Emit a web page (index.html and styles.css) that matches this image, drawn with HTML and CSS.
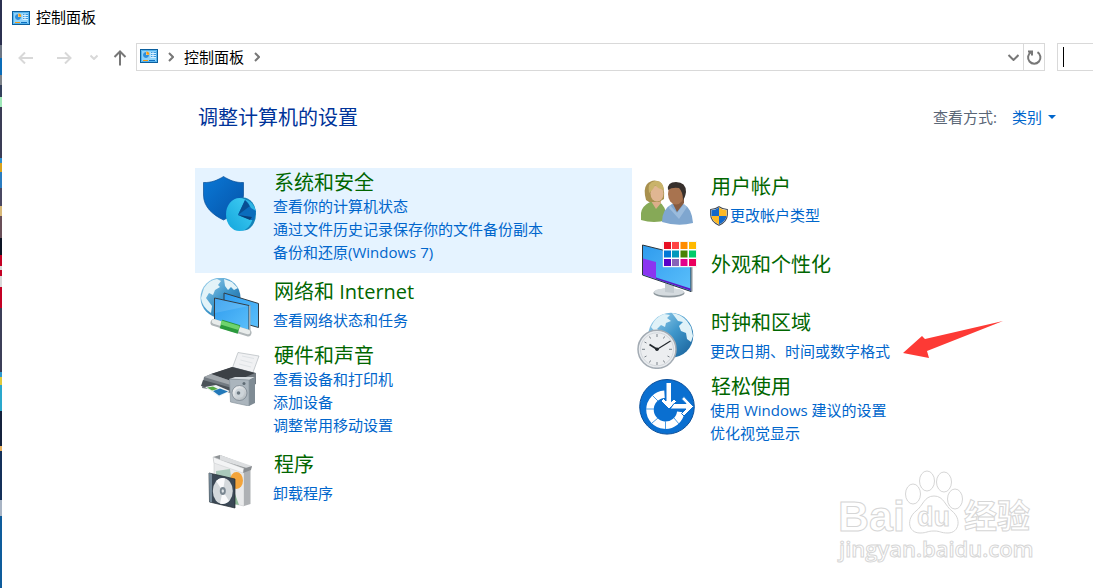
FILE: index.html
```
<!DOCTYPE html>
<html lang="zh-CN">
<head>
  <meta charset="UTF-8">
  <meta name="viewport" content="width=device-width, initial-scale=1.0">
  <title>控制面板</title>
  <link rel="stylesheet" href="styles.css">
</head>
<body>
  <svg class="defs" aria-hidden="true">
    <defs>
      <symbol id="panel-icon" viewBox="0 0 18 14">
        <rect x="0.5" y="0.5" width="17" height="13" fill="#8fd3fb" stroke="#0b5f9e"/>
        <path d="M1.5 1.5h15v11h-15z" fill="none" stroke="#56b4ee"/>
        <circle cx="6" cy="6" r="3" fill="#fff"/>
        <path d="M6 3a3 3 0 1 0 3 3H6z" fill="#2c8fdc"/>
        <path d="M6.3 5.7V2.6a3.1 3.1 0 0 1 3 3.1z" fill="#f59a12"/>
        <path d="M10.500 3h5.500v6h-5.500z" fill="#d8f0ff"/>
        <path d="M11 3.5h1.5M13.5 3.5H16M11 5.5h1.500M13.5 5.5H16M11 7.500h1.500M13.5 7.500H16" stroke="#3c9be0"/>
        <path d="M3 11.500h5" stroke="#f59a12"/>
        <path d="M9 11.500h6" stroke="#0d6fc0"/>
      </symbol>
      <linearGradient id="globe" x1="0" y1="0" x2="1" y2="1">
        <stop offset="0" stop-color="#a9d8f0"/>
        <stop offset="0.5" stop-color="#3f97cb"/>
        <stop offset="1" stop-color="#155c96"/>
      </linearGradient>
      <linearGradient id="screen" x1="0" y1="0" x2="1" y2="1">
        <stop offset="0" stop-color="#2e9bee"/>
        <stop offset="1" stop-color="#5cc0fb"/>
      </linearGradient>
      <linearGradient id="metal" x1="0" y1="0" x2="1" y2="1">
        <stop offset="0" stop-color="#fafbfc"/>
        <stop offset="1" stop-color="#aab2b8"/>
      </linearGradient>
      <linearGradient id="shield" x1="0" y1="0" x2="1" y2="1">
        <stop offset="0" stop-color="#0a78d6"/>
        <stop offset="1" stop-color="#0553a8"/>
      </linearGradient>
      <linearGradient id="pie" x1="0" y1="1" x2="1" y2="0">
        <stop offset="0" stop-color="#12a5dc"/>
        <stop offset="1" stop-color="#45d0f5"/>
      </linearGradient>
    </defs>
  </svg>

  <div class="window">
    <header class="title-bar">
      <svg class="panel-icon"><use href="#panel-icon"/></svg>
      <span>控制面板</span>
    </header>

    <nav class="toolbar">
      <div class="nav-buttons">
        <button type="button" aria-label="后退" disabled>
          <svg width="16" height="14" viewBox="0 0 16 14"><path d="M15 8H1.500M7 2.500L1.500 8L7 13.500"/></svg>
        </button>
        <button type="button" aria-label="前进" disabled>
          <svg width="16" height="14" viewBox="0 0 16 14"><path d="M1 8h13.500M9 2.500L14.500 8L9 13.500"/></svg>
        </button>
        <button type="button" class="recent" aria-label="最近位置" disabled>
          <svg width="8" height="6" viewBox="0 0 8 6"><path d="M0.500 1.500L4 5L7.500 1.500"/></svg>
        </button>
        <button type="button" class="up" aria-label="上移">
          <svg width="14" height="18" viewBox="0 0 14 18"><path d="M7 17.500V3.500M1.500 9L7 3.500L12.500 9"/></svg>
        </button>
      </div>
      <div class="address">
        <svg class="panel-icon"><use href="#panel-icon"/></svg>
        <svg class="chevron" viewBox="0 0 6 10"><path d="M1 1l4 4l-4 4"/></svg>
        <a href="#">控制面板</a>
        <svg class="chevron" viewBox="0 0 6 10"><path d="M1 1l4 4l-4 4"/></svg>
        <button type="button" class="history" aria-label="历史记录">
          <svg width="12" height="8" viewBox="0 0 12 8"><path d="M1.500 2l5 5l5-5"/></svg>
        </button>
        <button type="button" class="refresh" aria-label="刷新">
          <svg width="16" height="16" viewBox="0 0 16 16"><path d="M11.500 3.200A6.200 6.200 0 1 1 5 3.200M2 2.500h4v4"/></svg>
        </button>
      </div>
      <div class="search">
        <input type="text" aria-label="搜索">
      </div>
    </nav>

    <main>
      <div class="heading">
        <h1>调整计算机的设置</h1>
        <div class="view-by">
          <label for="view">查看方式:</label>
          <span class="view-select">
            <select id="view">
              <option>类别</option>
            </select>
          </span>
        </div>
      </div>

      <div class="categories">
        <div class="column">
          <section class="category dense selected">
            <svg class="icon" viewBox="0 0 60 60">
              <path d="M3.500 9.500C11 10 18 7 23.500 3.500C29 7 36 10 43.500 9.500V22C43.500 34 34 42 23.500 47C13 42 3.500 34 3.500 22Z" fill="url(#shield)" stroke="#0a4f96" stroke-width="0.700"/>
              <ellipse cx="43" cy="41" rx="13" ry="16.500" fill="#1583b8"/>
              <ellipse cx="39.500" cy="41.500" rx="13.500" ry="16.500" fill="url(#pie)"/>
              <path d="M38 42L45 27L51 31L56 38L54 47L51 47Z" fill="#0a6cbc"/>
              <path d="M38 42L45 27L50 33Z" fill="#084f93"/>
              <path d="M38 42L52 44L50 47Z" fill="#08407a"/>
              <path d="M45 26.500Q53 28 56 38L51 35Q49 30 45 26.500Z" fill="#2fb4e4"/>
            </svg>
            <div class="text">
              <h2><a href="#">系统和安全</a></h2>
              <ul>
                <li><a href="#">查看你的计算机状态</a></li>
                <li><a href="#">通过文件历史记录保存你的文件备份副本</a></li>
                <li><a href="#">备份和还原(Windows 7)</a></li>
              </ul>
            </div>
          </section>

          <section class="category">
            <svg class="icon" viewBox="0 0 60 60">
              <circle cx="20.500" cy="19.700" r="20" fill="url(#globe)"/>
              <path d="M4 10Q9 2 17 1L21 3L18 7L20 9L15 12L13 17L9 15L6 20L9 24L12 28L11 35Q2 29 1 20Z" fill="#e3f3f8"/>
              <path d="M24 1L32 4L38 10L34 12L31 9L28 12L25 8Z" fill="#e3f3f8"/>
              <path d="M24 15L58.500 25.500V49.500L46 46L24 38Z" fill="url(#screen)" stroke="#333d45"/>
              <path d="M14.500 20L49 27.500V54L14.500 42Z" fill="url(#screen)" stroke="#333d45"/>
              <path d="M15 20.500L48.500 28L15 35Z" fill="#fff" opacity="0.120"/>
              <path d="M49 28V54L50.500 53V27Z" fill="#a3adb3"/>
              <path d="M14 44.500L48 55" stroke="#afb6b8" stroke-width="7" stroke-linecap="round"/>
              <path d="M14 43.500L48 54" stroke="#e8eceb" stroke-width="4.500" stroke-linecap="round"/>
              <path d="M21 46L39 51.500" stroke="#2a9a3c" stroke-width="9"/>
              <path d="M21 44.500L39 50" stroke="#6fd36d" stroke-width="4"/>
            </svg>
            <div class="text">
              <h2><a href="#">网络和 Internet</a></h2>
              <ul>
                <li><a href="#">查看网络状态和任务</a></li>
              </ul>
            </div>
          </section>

          <section class="category dense">
            <svg class="icon" viewBox="0 0 60 60">
              <path d="M38 6.500L59 10L52 29L32 23Z" fill="#f0f1f3" stroke="#b4babf" stroke-width="0.700"/>
              <path d="M42 10l12 2.500M40.500 14l12 3M39 18l12 3" stroke="#dfe3e6"/>
              <path d="M4 31L11 28L33 21L56 27V38L33 47L2 42Z" fill="#737b82"/>
              <path d="M11 28L32 21L55 27L34 36Z" fill="#3c4146"/>
              <path d="M4 31L11 28L34 36V40Z" fill="#a2a8ad"/>
              <path d="M3 34L32 42V47L1 40Z" fill="#4b5259"/>
              <path d="M5 41L16 39L30 45L19 51Z" fill="#eef3f5"/>
              <path d="M7 41.500L13 40.500L18 43L12 44.500Z" fill="#54a944"/>
              <path d="M13 45L20 42.500L28 45.500L19 49.500Z" fill="#2278b8"/>
              <path d="M29.500 33L35 31H55L49 34Z" fill="#d4dade"/>
              <path d="M49 34L55 31V57L49 60Z" fill="#7f8b94"/>
              <path d="M29.500 33L49 34V60L30.500 56Z" fill="#abb5bd" stroke="#89959e" stroke-width="0.700"/>
              <circle cx="39.500" cy="47" r="7.500" fill="url(#metal)" stroke="#717d86" stroke-width="0.700"/>
              <circle cx="39.500" cy="47" r="4.500" fill="#cdd4d9"/>
              <circle cx="38.500" cy="47" r="1.800" fill="#6d7982"/>
              <circle cx="44" cy="37.500" r="1.500" fill="#5f6b74"/>
            </svg>
            <div class="text">
              <h2><a href="#">硬件和声音</a></h2>
              <ul>
                <li><a href="#">查看设备和打印机</a></li>
                <li><a href="#">添加设备</a></li>
                <li><a href="#">调整常用移动设置</a></li>
              </ul>
            </div>
          </section>

          <section class="category">
            <svg class="icon" viewBox="0 0 60 60">
              <path d="M14 9L44 18V55L14 49Z" fill="#e9eaeb" stroke="#c3c5c7" stroke-width="0.500"/>
              <path d="M44 18L50.500 16V53L44 55Z" fill="#aeb1b4"/>
              <path d="M13 6L20 4L52 16L44 20L14 11Z" fill="#8f9396"/>
              <path d="M20 4L52 15L50 18L20 9Z" fill="#dcdee0"/>
              <path d="M13 6L44 17.500L43 22L14 12Z" fill="#f3f4f5" stroke="#c6c8ca" stroke-width="0.500"/>
              <path d="M44 17.500L52 15L51 19L43 22Z" fill="#898d91"/>
              <path d="M16 20L30 18L32 32H16Z" fill="#a9c9ba"/>
              <path d="M34 40L39 54L34 53Z" fill="#8fbb98"/>
              <ellipse cx="36.500" cy="29.500" rx="6.500" ry="8.500" fill="#f3a43b"/>
              <path d="M9 22L35 28V57L9.500 51Z" fill="#3b4855" stroke="#20292f" stroke-width="0.700"/>
              <path d="M9 22L12 22.800V51.500L9.500 51Z" fill="#748897"/>
              <ellipse cx="22.800" cy="40" rx="10" ry="13" fill="#d4d9dc"/>
              <path d="M22.800 40L16 30Q20 26 25 27.500ZM22.800 40L29 50Q25 54 20 52.500Z" fill="#f9fafb"/>
              <ellipse cx="22.800" cy="40" rx="3" ry="4" fill="#7a8791"/>
              <ellipse cx="22.800" cy="40" rx="1.200" ry="1.700" fill="#dfe4e7"/>
            </svg>
            <div class="text">
              <h2><a href="#">程序</a></h2>
              <ul>
                <li><a href="#">卸载程序</a></li>
              </ul>
            </div>
          </section>
        </div>

        <div class="column">
          <section class="category">
            <svg class="icon" viewBox="0 0 60 60">
              <path d="M4 47V40Q5 33 13 29H22Q29 32 30 47Q17 51 4 47Z" fill="#86a957"/>
              <path d="M14 28L19 36L24 30V24H14Z" fill="#dcae89"/>
              <path d="M9 27Q6 16 10 11Q16 5 23 9Q28 13 27 26L22 29L12 29Z" fill="#a8904e"/>
              <ellipse cx="20" cy="20.500" rx="6.500" ry="8" fill="#e0b692"/>
              <path d="M12 20Q17 16 18 12Q21 16 27 17Q26 7 18 8Q10 9 12 20Z" fill="#c9b36b"/>
              <path d="M25 49Q25 36 35 31L46 31Q55 35 56 50Q41 54 25 49Z" fill="#7fa6cf"/>
              <path d="M35 29L40 39L47 30V26H35Z" fill="#875b40"/>
              <path d="M33 32L40 40L47 31L50 34L42 46L32 35Z" fill="#9bbbdc"/>
              <ellipse cx="39" cy="21" rx="8" ry="10.500" fill="#a8734f"/>
              <path d="M31 17Q30 9 39 9Q49 9 49 19Q48 25 46 27Q46 19 42 15Q35 14 31 17Z" fill="#37302c"/>
            </svg>
            <div class="text">
              <h2><a href="#">用户帐户</a></h2>
              <ul>
                <li>
                  <a href="#" class="with-shield">
                    <svg width="18" height="20" viewBox="0 0 18 20">
                      <path d="M9 0.700Q5 3.500 0.700 3.500V9Q1 15.500 9 19.300Q17 15.500 17.300 9V3.500Q13 3.500 9 0.700Z" fill="#fff" stroke="#444b55" stroke-width="1.200"/>
                      <path d="M9 1.500Q5.500 4 1.500 4.200V10H9Z" fill="#1368c9"/>
                      <path d="M9 1.500Q12.500 4 16.500 4.200V10H9Z" fill="#fdb924"/>
                      <path d="M1.500 10H9V18.500Q2.500 15.500 1.500 10Z" fill="#fdb924"/>
                      <path d="M16.500 10H9V18.500Q15.500 15.500 16.500 10Z" fill="#1368c9"/>
                    </svg>
                    <span>更改帐户类型</span>
                  </a>
                </li>
              </ul>
            </div>
          </section>

          <section class="category title-only">
            <svg class="icon" viewBox="0 0 60 60">
              <ellipse cx="32" cy="52" rx="15.500" ry="4.500" fill="#8d979d"/>
              <ellipse cx="32" cy="51" rx="15" ry="3.800" fill="#d5dbdf"/>
              <path d="M28 42L37 45V52L28 51Z" fill="#c3cbd0"/>
              <path d="M5.500 4L54 16V50.500L5.500 34Z" fill="url(#screen)" stroke="#2d363d"/>
              <path d="M54 15.500L55.500 16V50.500L54 51Z" fill="#87939b"/>
              <path d="M6 17.500L19 21V38L6 33.500Z" fill="#8a35f0"/>
              <path d="M19 36.500L53.500 47.500V49.500L19 38Z" fill="#5d16c4"/>
              <path d="M26 0H60V26H26Z" fill="#fff" stroke="#dcdcdc" stroke-width="0.500"/>
              <path d="M27 1h7v7h-7z" fill="#e81123"/>
              <path d="M35 1h7v7h-7z" fill="#ff4343"/>
              <path d="M43.500 1h7v7h-7z" fill="#ff8c00"/>
              <path d="M52 1h7v7H52z" fill="#ffb900"/>
              <path d="M27 9.500h7v7h-7z" fill="#0078d7"/>
              <path d="M35 9.500h7v7h-7z" fill="#0099bc"/>
              <path d="M43.500 9.500h7v7h-7z" fill="#498205"/>
              <path d="M52 9.500h7v7H52z" fill="#00cc6a"/>
              <path d="M27 18h7v7h-7z" fill="#5a00c8"/>
              <path d="M35 18h7v7h-7z" fill="#8764b8"/>
              <path d="M43.500 18h7v7h-7z" fill="#e3008c"/>
              <path d="M52 18h7v7H52z" fill="#ea005e"/>
            </svg>
            <div class="text">
              <h2><a href="#">外观和个性化</a></h2>
            </div>
          </section>

          <section class="category">
            <svg class="icon" viewBox="0 0 60 60">
              <circle cx="33.800" cy="26.300" r="22.500" fill="url(#globe)"/>
              <path d="M14 18Q18 8 27 5L33 6L30 9L34 12L29 14L28 18L24 16L20 20L24 23L19 24Z" fill="#e0f2f8"/>
              <path d="M35 4Q44 5 50 12L54 18L56 27L54 33L50 30L49 24L44 22L42 17L46 13L41 12L38 8Z" fill="#e0f2f8"/>
              <circle cx="20" cy="40.300" r="19" fill="#e9ecef" stroke="#a3abb3" stroke-width="1.500"/>
              <circle cx="20" cy="40.300" r="16.500" fill="#eceef0" stroke="#d3d7dc"/>
              <path d="M20 25v3M20 53v3M5 40.300h3M32 40.300h3M12.500 27.500l1 2M26.500 51.500l1 2M7.500 33l2 1M30.500 47l2 1M27.500 27.500l-1 2M13.500 51.500l-1 2M9.500 47l-2 1" stroke="#7b828a"/>
              <path d="M20 40.300L12.500 35.500" stroke="#22272c" stroke-width="1.700"/>
              <path d="M19 41L33.500 32" stroke="#22272c" stroke-width="1.200"/>
              <circle cx="20" cy="40.300" r="1.800" fill="#22272c"/>
            </svg>
            <div class="text">
              <h2><a href="#">时钟和区域</a></h2>
              <ul>
                <li><a href="#">更改日期、时间或数字格式</a></li>
              </ul>
            </div>
          </section>

          <section class="category dense">
            <svg class="icon" viewBox="0 0 60 60">
              <circle cx="30" cy="29.800" r="27.300" fill="#0a6fd0" stroke="#0a4f9b"/>
              <path d="M27.500 17.200A15.500 15.500 0 1 0 43.800 35" fill="none" stroke="#fff" stroke-width="7.500"/>
              <path d="M15 18l6 6M9 32h8M15 46l6-5M28.500 52v-8M42 47l-5-6" stroke="#4b9be4"/>
              <path d="M29 5.500h5.500v19l2.500-2.500l2.500 2.500L32 32l-8-8l2.500-2.500L29 24Z" fill="#fff" stroke="#0a6fd0"/>
              <path d="M33 32L37 26.500h12l-4.500-4.500l2.500-2.500L56.500 29.500L47 39l-2.500-2.500L49 32Z" fill="#fff" stroke="#0a6fd0"/>
            </svg>
            <div class="text">
              <h2><a href="#">轻松使用</a></h2>
              <ul>
                <li><a href="#">使用 Windows 建议的设置</a></li>
                <li><a href="#">优化视觉显示</a></li>
              </ul>
            </div>
          </section>
        </div>
      </div>
    </main>

    <svg class="pointer" viewBox="0 0 100 38" aria-hidden="true">
      <path d="M100 0L22 18L19 15L0 32L26 37L24 30Z" fill="#fd3a35"/>
    </svg>

    <svg class="watermark" viewBox="0 0 204 100">
      <text class="brand" x="3" y="65">Bai</text>
      <g class="paw">
        <ellipse cx="78" cy="28" rx="7.500" ry="10"/>
        <ellipse cx="92" cy="15" rx="7.500" ry="10"/>
        <ellipse cx="109" cy="16" rx="7.500" ry="10"/>
        <ellipse cx="120" cy="33" rx="7.500" ry="10"/>
        <path d="M99 30C109 30 110 40 117 45C127 53 124 67 113 67C105 67 106 65 99 65C92 65 92 67 85 67C73 67 71 53 81 45C88 40 89 30 99 30Z"/>
      </g>
      <text class="du" x="82" y="60">du</text>
      <text class="name" x="129" y="62">经验</text>
      <text class="site" x="4" y="91">jingyan.baidu.com</text>
    </svg>
  </div>
</body>
</html>
```
FILE: styles.css
```
* {
  box-sizing: border-box;
}

body {
  margin: 0;
  font-family: "Open Sans", "Noto Sans CJK SC", sans-serif;
  font-size: 15px;
  line-height: 23px;
  color: #000;
  /* sliver of the desktop behind the window */
  background: linear-gradient(#2b3050 0 45px, #6d7684 45px 58px, #0a6cb8 58px 75px, #7d8288 75px 85px,
    #34405c 85px 97px, #9fe8b8 97px 107px, #3a3c55 107px 158px, #2d8fd0 158px 163px, #d9a21c 163px 172px,
    #2a7cc0 172px 188px, #4a4862 188px 206px, #d8b878 206px 216px, #694f58 216px 238px, #0c1424 238px 255px,
    #c40024 255px 266px, #d8d8d8 266px 270px, #c40024 270px 276px, #d8d8d8 276px 287px, #c40024 287px 308px,
    #3c3f58 308px 372px, #2c9ad0 372px 377px, #e0c83c 377px 385px, #2aa8cc 385px 411px, #14213c 411px 446px,
    #e8b060 446px 451px, #14305a 451px 500px, #a8b4c4 500px 516px, #0e5c9c 516px);
}

button,
input,
select {
  font: inherit;
  border: 0;
  padding: 0;
  margin: 0;
  background: none;
}

button {
  display: flex;
  align-items: center;
  justify-content: center;
}

a {
  color: #0066cc;
  text-decoration: none;
}

a:hover {
  text-decoration: underline;
}

.defs {
  position: absolute;
  width: 0;
  height: 0;
}

.window {
  position: relative;
  min-height: 100vh;
  margin-left: 2px;
  background: #fff;
  overflow: hidden;
}

.panel-icon {
  width: 18px;
  height: 14px;
  flex: none;
}

/* title bar */

.title-bar {
  display: flex;
  align-items: center;
  gap: 6px;
  height: 35px;
  padding-left: 10px;
}

/* toolbar */

.toolbar {
  display: flex;
  align-items: center;
  margin-top: 8px;
  padding-left: 16px;
}

.toolbar path {
  fill: none;
  stroke: #777;
  stroke-width: 2;
}

.nav-buttons {
  display: flex;
  align-items: center;
  gap: 22px;
  padding-right: 9px;
}

.nav-buttons button:disabled path {
  stroke: #d8d8d8;
}

.nav-buttons .recent {
  margin-left: -4px;
}

.nav-buttons .up {
  margin-left: -7px;
}

.address {
  display: flex;
  flex: 1;
  align-items: center;
  height: 28px;
  padding-left: 3px;
  border: 1px solid #d9d9d9;
}

.address .panel-icon {
  margin-bottom: 2px;
}

.address a {
  color: #000;
}

.chevron {
  width: 6px;
  height: 10px;
  margin: 0 10px;
}

.history {
  width: 20px;
  height: 26px;
  margin-left: auto;
}

.refresh {
  width: 21px;
  height: 26px;
  border-left: 1px solid #d9d9d9;
}

.search {
  display: flex;
  align-items: center;
  width: 36px;
  height: 28px;
  margin-left: 12px;
  padding-left: 5px;
  border: 1px solid #d9d9d9;
  border-right: 0;
}

.search::before {
  content: '';
  width: 1px;
  height: 20px;
  background: #000;
}

.search input {
  width: 100%;
  outline: none;
}

/* content */

main {
  padding: 31px 24px 0 193px;
}

.heading {
  display: flex;
  align-items: center;
  justify-content: space-between;
  height: 30px;
  padding: 0 13px 0 3px;
}

.heading h1 {
  margin: 0;
  font-size: 20px;
  font-weight: 400;
  color: #003399;
}

.view-by {
  display: flex;
  align-items: center;
  gap: 15px;
  color: #5a6676;
}

.view-select {
  display: flex;
  align-items: center;
  gap: 5px;
}

.view-select select {
  appearance: none;
  color: #0066cc;
}

.view-select::after {
  content: '';
  border: 4px solid transparent;
  border-top-color: #0066cc;
  border-bottom: 0;
}

.categories {
  display: grid;
  grid-template-columns: 1fr 1fr;
  align-items: start;
  margin-top: 36px;
}

.category {
  display: flex;
  gap: 13px;
  min-height: 68px;
  padding: 5px 0 0 5px;
}

.category .icon {
  width: 60px;
  height: 60px;
  flex: none;
}

.category.dense {
  min-height: 105px;
}

.category.selected {
  background: #e5f3ff;
}

.category h2 {
  margin: 0 0 5px;
  padding-left: 1px;
  font-size: 20px;
  line-height: 24px;
  font-weight: 400;
}

.category h2 a {
  color: #006600;
}

.category .text {
  margin-top: 2px;
}

.category.dense .text {
  margin-top: -2px;
}

.category.dense h2 {
  margin-bottom: 0;
}

.category.title-only .text {
  margin-top: 12px;
}

.category ul {
  margin: 0;
  padding: 0;
  list-style: none;
}

.with-shield {
  display: flex;
  align-items: center;
  gap: 2px;
}

/* annotations over the page */

.pointer {
  position: absolute;
  left: 901px;
  top: 321px;
  width: 100px;
  height: 38px;
}

.watermark {
  position: absolute;
  left: 833px;
  top: 466px;
  width: 204px;
  height: 100px;
}

.watermark text,
.paw * {
  fill: #fff;
  stroke: #d6d6d6;
  stroke-width: 1px;
}

.brand {
  font: bold 43px "Liberation Sans", sans-serif;
}

.du {
  font: bold 27px "Liberation Sans", sans-serif;
}

.name {
  font: bold 33px/1 "Noto Sans CJK SC", sans-serif;
}

.site {
  font: 600 22px/1 "Open Sans", sans-serif;
}
```
